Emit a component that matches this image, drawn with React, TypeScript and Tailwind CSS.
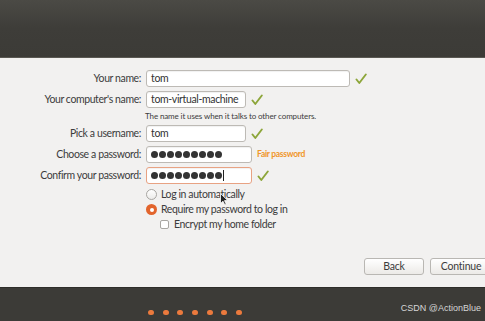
import React from "react";

const Check = () => (
  <svg width="12" height="12" viewBox="0 0 12 12" className="shrink-0">
    <path d="M1.5 6.5 L4.3 10 L10.8 1.5" fill="none" stroke="#8da63a" strokeWidth="1.9" strokeLinecap="round" strokeLinejoin="round" />
  </svg>
);

const Dots = ({ caret }: { caret?: boolean }) => (
  <div className="flex items-center gap-[1px]">
    {Array.from({ length: 9 }).map((_, i) => (
      <div key={i} className="w-[7px] h-[7px] rounded-full bg-[#333333]" />
    ))}
    {caret && <div className="w-[1px] h-[11px] bg-[#222]" />}
  </div>
);

const Label = ({ children }: { children: React.ReactNode }) => (
  <div className="w-[146px] shrink-0 text-right pr-[5px] text-[10.5px] tracking-[-0.4px] text-[#3c3c3c] leading-none whitespace-nowrap">{children}</div>
);

const inputBase =
  "h-[17px] bg-white rounded-[3px] border flex items-center px-[4px] text-[10.5px] tracking-[-0.35px] text-[#333] leading-none whitespace-nowrap shadow-[inset_0_1px_1px_rgba(0,0,0,0.06)]";

export default function App() {
  return (
    <div className="w-[485px] h-[321px] overflow-hidden flex flex-col" style={{ fontFamily: 'Lato, "Open Sans", sans-serif' }}>
      <div className="h-[58px] shrink-0 bg-gradient-to-b from-[#4b4a45] via-[#3e3d39] to-[#3c3b37] border-b border-[#5a5852]" />
      <div className="flex-1 bg-[#f2f1f0] relative flex flex-col pt-[12px]">
        <div className="flex items-center h-[17px]">
          <Label>Your name:</Label>
          <div className={inputBase + " border-[#bdbab5] w-[204px]"}>tom</div>
          <div className="ml-[5px]"><Check /></div>
        </div>
        <div className="flex items-center h-[17px] mt-[4px]">
          <Label>Your computer's name:</Label>
          <div className={inputBase + " border-[#bdbab5] w-[100px]"}>tom-virtual-machine</div>
          <div className="ml-[5px]"><Check /></div>
        </div>
        <div className="pl-[145px] mt-[2px] text-[8px] tracking-[-0.12px] text-[#3c3c3c] leading-[12px] whitespace-nowrap">
          The name it uses when it talks to other computers.
        </div>
        <div className="flex items-center h-[17px] mt-[3px]">
          <Label>Pick a username:</Label>
          <div className={inputBase + " border-[#bdbab5] w-[100px]"}>tom</div>
          <div className="ml-[5px]"><Check /></div>
        </div>
        <div className="flex items-center h-[17px] mt-[4px]">
          <Label>Choose a password:</Label>
          <div className={inputBase + " border-[#bdbab5] w-[106px]"}><Dots /></div>
          <div className="ml-[5px] text-[8.5px] tracking-[-0.3px] font-bold text-[#f0962a] leading-none whitespace-nowrap">Fair password</div>
        </div>
        <div className="flex items-center h-[17px] mt-[4px]">
          <Label>Confirm your password:</Label>
          <div className={inputBase + " border-[#e8a283] w-[106px]"}><Dots caret /></div>
          <div className="ml-[5px]"><Check /></div>
        </div>
        <div className="flex flex-col pl-[146px] mt-[3px] text-[10.5px] tracking-[-0.4px] text-[#3c3c3c] leading-none whitespace-nowrap">
          <div className="flex items-center h-[15px]">
            <div className="w-[11px] h-[11px] rounded-full border border-[#a8a6a2] bg-gradient-to-b from-white to-[#ecebe9]" />
            <span className="ml-[4px]">Log in automatically</span>
          </div>
          <div className="flex items-center h-[15px]">
            <div className="w-[11px] h-[11px] rounded-full bg-[#e2642c] flex items-center justify-center">
              <div className="w-[4px] h-[4px] rounded-full bg-white" />
            </div>
            <span className="ml-[4px]">Require my password to log in</span>
          </div>
          <div className="flex items-center h-[15px] pl-[14px]">
            <div className="w-[9px] h-[9px] rounded-[2px] border border-[#a8a6a2] bg-white" />
            <span className="ml-[5px]">Encrypt my home folder</span>
          </div>
        </div>
        <div className="flex-1" />
        <div className="flex justify-end gap-[6px] mb-[12px] -mr-[7px]">
          <div className="w-[60px] h-[17px] rounded-[3px] border border-[#b9b7b3] bg-gradient-to-b from-white to-[#eceae7] flex items-center justify-center text-[10.5px] tracking-[-0.2px] text-[#3c3c3c] leading-none">Back</div>
          <div className="w-[62px] h-[17px] rounded-[3px] border border-[#b9b7b3] bg-gradient-to-b from-white to-[#eceae7] flex items-center justify-center text-[10.5px] tracking-[-0.2px] text-[#3c3c3c] leading-none">Continue</div>
        </div>
        <svg className="absolute left-[220px] top-[135px]" width="9" height="13" viewBox="0 0 9 13">
          <path d="M0.5 0.5 L0.5 10.5 L3 8.2 L4.8 12 L6.2 11.3 L4.5 7.6 L7.8 7.6 Z" fill="#222" stroke="#fff" strokeWidth="0.8" />
        </svg>
      </div>
      <div className="h-[34px] shrink-0 bg-[#3c3b37] border-t border-[#2e2d2a] relative">
        <div className="absolute left-[148px] top-[22px] flex gap-[8.7px]">
          {Array.from({ length: 7 }).map((_, i) => (
            <div key={i} className="w-[6px] h-[5px] rounded-full bg-[#ec7a3d]" />
          ))}
        </div>
        <div className="absolute right-[4px] top-[16px] text-[9px] text-[#d6d6d6] leading-none whitespace-nowrap" style={{ fontFamily: '"Liberation Sans", Arial, sans-serif' }}>
          CSDN @ActionBlue
        </div>
      </div>
    </div>
  );
}
